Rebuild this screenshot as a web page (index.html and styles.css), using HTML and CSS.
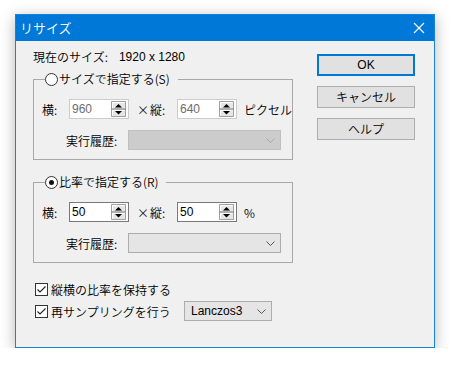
FILE: index.html
```html
<!DOCTYPE html>
<html lang="ja">
<head>
    <meta charset="UTF-8">
    <title>リサイズ</title>
    <link rel="stylesheet" href="styles.css">
</head>
<body>
    <div class="window">
        <div class="titlebar">
            <span class="title">リサイズ</span>
            <svg class="close" width="12" height="12" viewBox="0 0 12 12">
                <path d="M1 1 L11 11 M11 1 L1 11" stroke="#fff" stroke-width="1.1" fill="none"/>
            </svg>
        </div>
        <div class="dialog">
            <div class="main">
                <div class="current">
                    <span>現在のサイズ:</span>
                    <span class="num">1920 x 1280</span>
                </div>

                <fieldset class="group">
                    <legend><span class="radio"></span>サイズで指定する(S)</legend>
                    <div class="row">
                        <span class="lbl">横:</span>
                        <div class="spin disabled">
                            <span class="num">960</span>
                            <svg class="spinbtn" width="15" height="16" viewBox="0 0 15 16">
                                <rect x="0" y="0" width="15" height="16" fill="#e6e6e6"/>
                                <path d="M0.5 0.5 H14.5 V15.5 H0.5 Z" fill="none" stroke="#a0a0a0"/>
                                <path d="M1.5 7.5 V1.5 H13.5 M1.5 14.5 V9.5 H13.5" fill="none" stroke="#fff"/>
                                <path d="M0.5 8 H14.5" stroke="#7a7a7a"/>
                                <path d="M4 6.5 H11 L7.5 3 Z" fill="#000"/>
                                <path d="M4 10 H11 L7.5 13.5 Z" fill="#000"/>
                            </svg>
                        </div>
                        <span class="times">×</span>
                        <span class="lbl">縦:</span>
                        <div class="spin disabled">
                            <span class="num">640</span>
                            <svg class="spinbtn" width="15" height="16" viewBox="0 0 15 16">
                                <rect x="0" y="0" width="15" height="16" fill="#e6e6e6"/>
                                <path d="M0.5 0.5 H14.5 V15.5 H0.5 Z" fill="none" stroke="#a0a0a0"/>
                                <path d="M1.5 7.5 V1.5 H13.5 M1.5 14.5 V9.5 H13.5" fill="none" stroke="#fff"/>
                                <path d="M0.5 8 H14.5" stroke="#7a7a7a"/>
                                <path d="M4 6.5 H11 L7.5 3 Z" fill="#000"/>
                                <path d="M4 10 H11 L7.5 13.5 Z" fill="#000"/>
                            </svg>
                        </div>
                        <span class="unit">ピクセル</span>
                    </div>
                    <div class="row history">
                        <span class="hist-lbl">実行履歴:</span>
                        <div class="combo disabled">
                            <svg class="chev" width="9" height="5" viewBox="0 0 9 5">
                                <path d="M0.5 0.5 L4.5 4.5 L8.5 0.5" fill="none" stroke="#a8a8a8"/>
                            </svg>
                        </div>
                    </div>
                </fieldset>

                <fieldset class="group second">
                    <legend><span class="radio checked"></span>比率で指定する(R)</legend>
                    <div class="row">
                        <span class="lbl">横:</span>
                        <div class="spin">
                            <span class="num">50</span>
                            <svg class="spinbtn" width="15" height="16" viewBox="0 0 15 16">
                                <rect x="0" y="0" width="15" height="16" fill="#e6e6e6"/>
                                <path d="M0.5 0.5 H14.5 V15.5 H0.5 Z" fill="none" stroke="#a0a0a0"/>
                                <path d="M1.5 7.5 V1.5 H13.5 M1.5 14.5 V9.5 H13.5" fill="none" stroke="#fff"/>
                                <path d="M0.5 8 H14.5" stroke="#7a7a7a"/>
                                <path d="M4 6.5 H11 L7.5 3 Z" fill="#000"/>
                                <path d="M4 10 H11 L7.5 13.5 Z" fill="#000"/>
                            </svg>
                        </div>
                        <span class="times">×</span>
                        <span class="lbl">縦:</span>
                        <div class="spin">
                            <span class="num">50</span>
                            <svg class="spinbtn" width="15" height="16" viewBox="0 0 15 16">
                                <rect x="0" y="0" width="15" height="16" fill="#e6e6e6"/>
                                <path d="M0.5 0.5 H14.5 V15.5 H0.5 Z" fill="none" stroke="#a0a0a0"/>
                                <path d="M1.5 7.5 V1.5 H13.5 M1.5 14.5 V9.5 H13.5" fill="none" stroke="#fff"/>
                                <path d="M0.5 8 H14.5" stroke="#7a7a7a"/>
                                <path d="M4 6.5 H11 L7.5 3 Z" fill="#000"/>
                                <path d="M4 10 H11 L7.5 13.5 Z" fill="#000"/>
                            </svg>
                        </div>
                        <span class="unit">%</span>
                    </div>
                    <div class="row history">
                        <span class="hist-lbl">実行履歴:</span>
                        <div class="combo">
                            <svg class="chev" width="9" height="5" viewBox="0 0 9 5">
                                <path d="M0.5 0.5 L4.5 4.5 L8.5 0.5" fill="none" stroke="#555"/>
                            </svg>
                        </div>
                    </div>
                </fieldset>

                <div class="check-row first">
                    <span class="checkbox">
                        <svg width="11" height="11" viewBox="0 0 11 11">
                            <path d="M1.5 5.5 L4 8 L9.5 2.5" fill="none" stroke="#222" stroke-width="1.1"/>
                        </svg>
                    </span>
                    <span>縦横の比率を保持する</span>
                </div>
                <div class="check-row">
                    <span class="checkbox">
                        <svg width="11" height="11" viewBox="0 0 11 11">
                            <path d="M1.5 5.5 L4 8 L9.5 2.5" fill="none" stroke="#222" stroke-width="1.1"/>
                        </svg>
                    </span>
                    <span class="check-text">再サンプリングを行う</span>
                    <div class="combo small">
                        <span class="num">Lanczos3</span>
                        <svg class="chev" width="9" height="5" viewBox="0 0 9 5">
                            <path d="M0.5 0.5 L4.5 4.5 L8.5 0.5" fill="none" stroke="#555"/>
                        </svg>
                    </div>
                </div>
            </div>

            <div class="buttons">
                <div class="btn default">OK</div>
                <div class="btn">キャンセル</div>
                <div class="btn">ヘルプ</div>
            </div>
        </div>
    </div>
</body>
</html>
```

FILE: styles.css
```css
:root {
    --title-blue: #0078d7;
    --face: #f0f0f0;
    --btn-face: #e1e1e1;
    --btn-border: #adadad;
    --ui-font: "Noto Sans CJK JP", "Noto Sans", sans-serif;
    --num-font: "Liberation Sans Narrow", "Liberation Sans", sans-serif;
}

html, body {
    margin: 0;
    background: #ffffff;
}

body {
    padding: 14px 0 0 15px;
    font-family: var(--ui-font);
    font-size: 12px;
    font-weight: 350;
    color: #000;
}

.window {
    width: 420px;
    height: 334px;
    box-sizing: border-box;
    border: 1px solid #1883d7;
    background: var(--face);
    box-shadow: 0 3px 14px rgba(0,0,0,0.28);
    display: flex;
    flex-direction: column;
}

.titlebar {
    height: 26px;
    background: var(--title-blue);
    display: flex;
    align-items: center;
    justify-content: space-between;
    padding: 0 9px 0 4px;
    flex-shrink: 0;
}

.title {
    color: #fff;
    font-size: 13px;
    line-height: 16px;
}

.close {
    display: block;
}

.dialog {
    display: flex;
    padding: 0 19px 0 17px;
}

.main {
    width: 260px;
    flex-shrink: 0;
    padding-top: 8px;
}

.current {
    height: 16px;
    line-height: 16px;
    display: flex;
    gap: 11px;
}

.num {
    font-family: var(--num-font);
    font-size: 12px;
    font-weight: 400;
}

.group {
    margin: 6px 0 0;
    padding: 12px 2px 9px 8px;
    border: 1px solid #a8a8a8;
    min-width: 0;
}

.group.second {
    margin-top: 14px;
}

.group legend {
    margin-left: 3px;
    padding: 0 8px 0 0;
    height: 16px;
    line-height: 16px;
    display: flex;
    align-items: center;
}

.radio {
    width: 11px;
    height: 11px;
    border: 1px solid #333;
    border-radius: 50%;
    background: #fff;
    margin-right: 1px;
    position: relative;
    box-sizing: content-box;
}

.radio.checked::after {
    content: '';
    position: absolute;
    left: 3px;
    top: 3px;
    width: 5px;
    height: 5px;
    border-radius: 50%;
    background: #111;
}

.row {
    display: flex;
    align-items: center;
    height: 20px;
    white-space: nowrap;
}

.row > * {
    flex-shrink: 0;
}

.row.history {
    margin-top: 11px;
    padding-left: 24px;
}

.lbl {
    width: 27px;
}

.times {
    width: 12px;
    margin-left: 8px;
    margin-right: 1px;
    text-align: center;
}

.spin {
    width: 60px;
    height: 20px;
    box-sizing: border-box;
    border: 1px solid #7a7a7a;
    background: #fff;
    display: flex;
    align-items: center;
    justify-content: space-between;
    padding: 0 2px 0 2px;
}

.spin.disabled {
    border-color: #cccccc;
}

.spin.disabled .num {
    color: #6d6d6d;
}

.spinbtn {
    display: block;
}

.unit {
    margin-left: 7px;
}

.hist-lbl {
    width: 62px;
}

.combo {
    width: 153px;
    height: 20px;
    box-sizing: border-box;
    border: 1px solid var(--btn-border);
    background: #e5e5e5;
    display: flex;
    align-items: center;
    justify-content: space-between;
    padding: 0 5px 0 6px;
}

.combo .chev {
    margin-left: auto;
}

.combo.disabled {
    background: #cccccc;
    border-color: #bfbfbf;
}

.combo.small {
    width: 88px;
    flex-shrink: 0;
}

.check-row {
    display: flex;
    align-items: center;
    height: 20px;
    margin-top: 2px;
    white-space: nowrap;
}

.check-row.first {
    margin-top: 16px;
}

.check-text {
    width: 133px;
    flex-shrink: 0;
}

.checkbox {
    width: 11px;
    height: 11px;
    border: 1px solid #333;
    background: #fff;
    margin: 0 3px 0 2px;
    display: flex;
    align-items: center;
    justify-content: center;
    flex-shrink: 0;
}

.checkbox svg {
    display: block;
}

.buttons {
    margin-left: 24px;
    padding-top: 13px;
    display: flex;
    flex-direction: column;
    gap: 10px;
}

.btn {
    width: 98px;
    height: 22px;
    box-sizing: border-box;
    border: 1px solid var(--btn-border);
    background: var(--btn-face);
    display: flex;
    align-items: center;
    justify-content: center;
    line-height: 16px;
}

.btn.default {
    border: 2px solid var(--title-blue);
    font-family: var(--num-font);
    font-weight: 400;
}
```
